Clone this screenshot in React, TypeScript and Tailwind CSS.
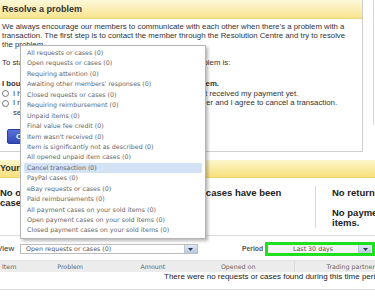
import React from "react";

const menuItems = [
  "All requests or cases (0)",
  "Open requests or cases (0)",
  "Requiring attention (0)",
  "Awaiting other members' responses (0)",
  "Closed requests or cases (0)",
  "Requiring reimbursement (0)",
  "Unpaid items (0)",
  "Final value fee credit (0)",
  "Item wasn't received (0)",
  "Item is significantly not as described (0)",
  "All opened unpaid item cases (0)",
  "Cancel transaction (0)",
  "PayPal cases (0)",
  "eBay requests or cases (0)",
  "Paid reimbursements (0)",
  "All payment cases on your sold items (0)",
  "Open payment cases on your sold items (0)",
  "Closed payment cases on your sold items (0)",
];

function Arrow() {
  return (
    <span className="flex h-full w-[13px] items-center justify-center border-l border-[#b9c6d8] bg-linear-to-b from-[#dfe8f3] to-[#b7c8de]">
      <svg width="5" height="3" viewBox="0 0 5 3">
        <path d="M0 0h5L2.5 3z" fill="#2a3a55" />
      </svg>
    </span>
  );
}

function Radio({ children }: { children: React.ReactNode }) {
  return (
    <div className="flex items-start">
      <span className="mt-[1.5px] mr-[4px] h-[7px] w-[7px] shrink-0 rounded-full border border-[#777] bg-white" />
      <span>{children}</span>
    </div>
  );
}

export default function App() {
  return (
    <div className="relative h-[300px] w-[375px] overflow-hidden bg-white font-['Liberation_Sans',Arial,sans-serif] text-[#333]">
      {/* resolve a problem */}
      <div className="flex h-[152px]">
        <div className="flex w-[363px] shrink-0 flex-col border-r border-b border-[#cfcfcf]">
          <div className="h-[19px] border-b border-[#ecd37a] bg-linear-to-b from-[#fdf8d9] to-[#f8e48e] pl-[2px] text-[9px] leading-[18px] font-bold text-[#333]">
            Resolve a problem
          </div>
          <div className="px-[2px] pt-[3px] text-[7.8px] leading-[9px] whitespace-nowrap">
            <p>
              We always encourage our members to communicate with each other when there's a problem with a
              <br />
              transaction. The first step is to contact the member through the Resolution Centre and try to resolve
              <br />
              the problem.
            </p>
            <p className="mt-[9px]">To start resolving your problem, please tell us what the problem is:</p>
            <div className="mt-[12px] flex leading-[9.5px]">
              <div className="w-[165px]">
                <p className="font-bold">I bought an item.</p>
                <Radio>I haven't received my item yet.</Radio>
                <Radio>
                  I received an item that is not as described
                  <br />
                  seller.
                </Radio>
              </div>
              <div>
                <p className="font-bold">I sold an item.</p>
                <Radio>I haven't received my payment yet.</Radio>
                <Radio>The buyer and I agree to cancel a transaction.</Radio>
              </div>
            </div>
            <button className="mt-[12px] ml-[5px] h-[15px] rounded-[2px] border border-[#2a3f9e] bg-linear-to-b from-[#5a72d8] to-[#3148b8] px-[8px] text-[8px] font-bold text-white">
              Continue
            </button>
          </div>
        </div>
        <div className="ml-[10px] h-[125px] flex-1 border-l border-[#d6d6d6]" />
      </div>

      {/* your cases */}
      <div className="mt-[8px] h-[18px] border-b border-[#ecd37a] bg-linear-to-b from-[#fdf6cc] to-[#f8e07a] text-[9px] leading-[17px] font-bold">
        Your requests and cases
      </div>
      <div className="flex h-[58px] border-b border-[#dcdcdc] text-[9.5px] leading-[10px] font-bold whitespace-nowrap text-[#222]">
        <div className="w-[315px] shrink-0 pt-[10px]">
          <p>No open unpaid item or canceled transaction cases have been</p>
          <p>cases found.</p>
        </div>
        <div className="mt-[8px] h-[42px] flex-1 border-l border-[#dcdcdc] pt-[2px] pl-[16px]">
          <p>No return requests.</p>
          <p className="mt-[9.5px]">
            No payment cases for your sold
            <br />
            items.
          </p>
        </div>
      </div>

      {/* filters */}
      <div className="mt-[6px] flex h-[14px] items-center font-['DejaVu_Sans',Verdana,sans-serif] text-[6.3px] text-[#555]">
        <span className="-ml-[3px] w-[24px] font-['Liberation_Sans',Arial,sans-serif] text-[8px] text-[#333]">View</span>
        <div className="flex h-[10px] w-[185px] items-center border border-[#bcbcbc] bg-white">
          <span className="flex-1 pl-[5px] leading-[8px]">Open requests or cases (0)</span>
          <Arrow />
        </div>
        <span className="ml-[44px] w-[24px] font-['Liberation_Sans',Arial,sans-serif] text-[6.8px] font-bold text-[#555]">Period</span>
        <div className="flex h-[14px] w-[110px] shrink-0 items-center border-[3px] border-[#1fe01f] bg-[#f3f3f3]">
          <span className="flex-1 text-center leading-[8px]">Last 30 days</span>
          <span className="mr-[1px] h-[8px]">
            <Arrow />
          </span>
        </div>
      </div>

      {/* table */}
      <div className="mt-[4px] flex h-[12px] items-center border-t border-[#e2e2e2] bg-[#ececec] font-['DejaVu_Sans',Verdana,sans-serif] text-[6.3px] whitespace-nowrap text-[#666]">
        <span className="w-[59px] pl-[2px]">Item</span>
        <span className="w-[86px]">Problem</span>
        <span className="w-[83px]">Amount</span>
        <span className="w-[75px]">Opened on</span>
        <span className="h-full w-[34px] border-l border-[#dadada]" />
        <span>Trading partner</span>
      </div>
      <div className="h-[18px] border-b border-[#dedede] pl-[164px] text-[8px] leading-[10px] whitespace-nowrap text-[#222]">
        There were no requests or cases found during this time period.
      </div>

      {/* open dropdown */}
      <div className="absolute top-[45px] left-[20px] w-[186px] border border-[#b5b5b5] bg-white px-[3px] py-[2px] font-['DejaVu_Sans',Verdana,sans-serif] text-[6.3px] text-[#666] shadow-[2px_2px_3px_rgba(0,0,0,0.28)]">
        {menuItems.map((item) => (
          <div
            key={item}
            className={`h-[10.45px] pl-[3px] leading-[10.45px] whitespace-nowrap ${item === "Cancel transaction (0)" ? "bg-[#d3e2f5]" : ""}`}
          >
            {item}
          </div>
        ))}
      </div>
    </div>
  );
}
